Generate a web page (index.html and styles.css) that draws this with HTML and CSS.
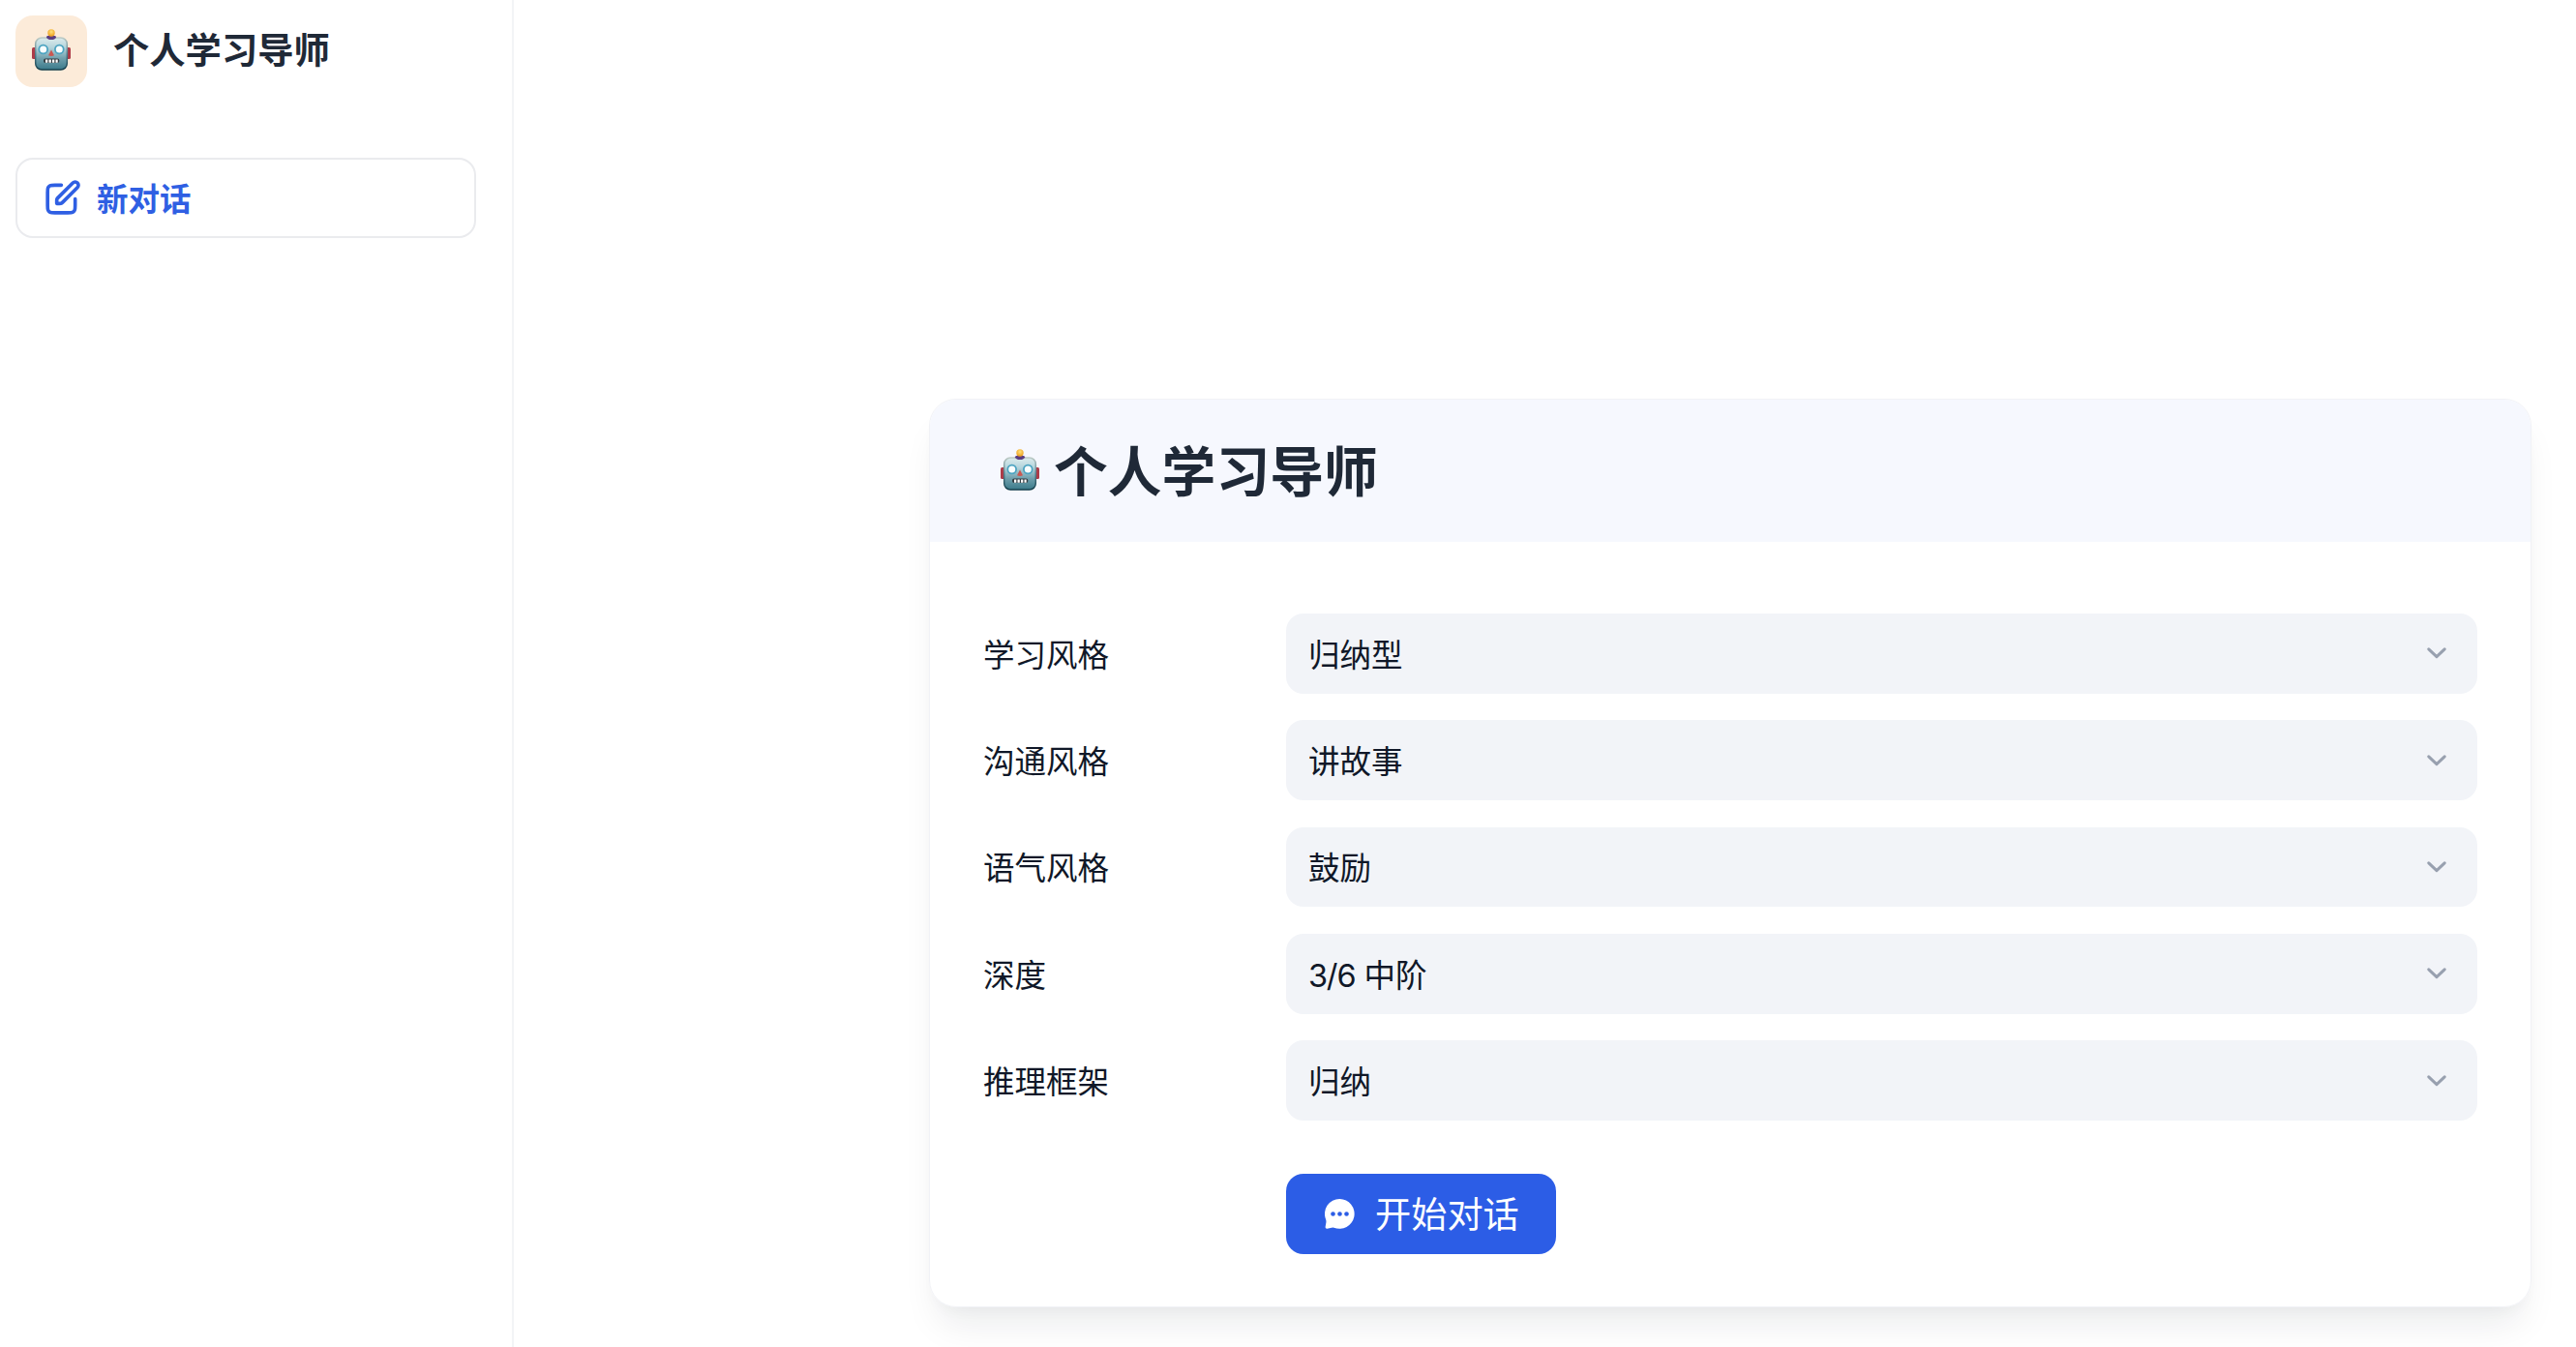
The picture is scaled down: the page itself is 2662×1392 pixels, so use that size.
FILE: index.html
```html
<!DOCTYPE html>
<html lang="zh-CN">
<head>
    <meta charset="UTF-8">
    <meta name="viewport" content="width=device-width, initial-scale=1.0">
    <title>个人学习导师</title>
    <link rel="stylesheet" href="styles.css">
</head>
<body>
 <!-- shared icons -->
 <svg class="defs" width="0" height="0">
  <defs>
   <linearGradient id="face" x1="0" y1="0" x2="0" y2="1">
    <stop offset="0" stop-color="#dcebec"/>
    <stop offset="0.3" stop-color="#b5d5dc"/>
    <stop offset="0.65" stop-color="#6f9fac"/>
    <stop offset="1" stop-color="#3b7a8a"/>
   </linearGradient>
   <linearGradient id="edge" x1="0" y1="0" x2="0" y2="1">
    <stop offset="0" stop-color="#bccac5"/>
    <stop offset="0.5" stop-color="#527f8c"/>
    <stop offset="1" stop-color="#143f4c"/>
   </linearGradient>
   <radialGradient id="bulb" cx="0.5" cy="0.35" r="0.6">
    <stop offset="0" stop-color="#ffe27a"/>
    <stop offset="1" stop-color="#eda01f"/>
   </radialGradient>
  </defs>
  <symbol id="robot" viewBox="0 0 40 43">
   <rect x="0" y="19" width="5" height="12" rx="1.5" fill="#ad3b48"/>
   <rect x="35" y="19" width="5" height="12" rx="1.5" fill="#ad3b48"/>
   <rect x="3.7" y="9" width="32.6" height="33" rx="6.5" fill="url(#face)" stroke="url(#edge)" stroke-width="1.5"/>
   <path d="M15 8.2Q15 6.5 20 6.5t5 1.700q-.5 2.800-5 2.800t-5-2.800z" fill="#5c3f80"/>
   <circle cx="20" cy="4" r="3.7" fill="url(#bulb)"/>
   <circle cx="11.7" cy="21" r="4.4" fill="#f8ffff" stroke="#4da4c1" stroke-width="1.8"/>
   <circle cx="28.3" cy="21" r="4.4" fill="#f8ffff" stroke="#4da4c1" stroke-width="1.8"/>
   <path d="M20 21.5l3 5.8q-3 1.2-6 0z" fill="#ca5751"/>
   <rect x="12" y="30.5" width="16.3" height="4.6" rx="2" fill="#343d42"/>
   <path d="M14 31.5h2.3v3.2H14zM17.5 31.5h2.3v3.2h-2.3zM21 31.5h2.3v3.2H21zM24.5 31.5h2.2v3.2h-2.2z" fill="#fff"/>
  </symbol>
  <symbol id="chevron" viewBox="0 0 20 12">
   <path d="M1.8 1.8L10 9.7l8.2-7.9" fill="none" stroke="#98a0af" stroke-width="3" stroke-linecap="round" stroke-linejoin="round"/>
  </symbol>
 </svg>

 <div class="main-container">
  <aside class="sidebar">
   <div class="brand">
    <div class="brand-icon"><svg class="robot"><use href="#robot"/></svg></div>
    <span class="brand-name">个人学习导师</span>
   </div>
   <button class="new-chat">
    <svg class="edit-icon" viewBox="0 0 24 24" fill="none" stroke="currentColor" stroke-width="2.3" stroke-linecap="round" stroke-linejoin="round">
     <path d="M11 4H6.8C5.12 4 4.28 4 3.638 4.327C3.074 4.615 2.615 5.074 2.327 5.638C2 6.28 2 7.12 2 8.8V17.2C2 18.88 2 19.72 2.327 20.362C2.615 20.927 3.074 21.386 3.638 21.673C4.28 22 5.12 22 6.8 22H15.2C16.88 22 17.72 22 18.362 21.673C18.927 21.386 19.385 20.927 19.673 20.362C20 19.72 20 18.88 20 17.2V13M8 16H9.675C10.164 16 10.408 16 10.639 15.945C10.843 15.896 11.038 15.815 11.217 15.705C11.418 15.582 11.591 15.409 11.937 15.063L21.5 5.5C22.328 4.672 22.328 3.328 21.5 2.5C20.672 1.672 19.328 1.672 18.5 2.5L8.937 12.063C8.591 12.409 8.418 12.582 8.295 12.783C8.185 12.962 8.104 13.157 8.055 13.362C8 13.592 8 13.836 8 14.326V16Z"/>
    </svg>
    <span class="text">新对话</span>
   </button>
  </aside>

  <main class="content">
   <section class="card">
    <header class="card-header">
     <svg class="robot"><use href="#robot"/></svg>
     <h1>个人学习导师</h1>
    </header>
    <div class="card-body">
     <div class="row">
      <label class="text">学习风格</label>
      <button class="select"><span class="text">归纳型</span><svg class="chevron"><use href="#chevron"/></svg></button>
     </div>
     <div class="row">
      <label class="text">沟通风格</label>
      <button class="select"><span class="text">讲故事</span><svg class="chevron"><use href="#chevron"/></svg></button>
     </div>
     <div class="row">
      <label class="text">语气风格</label>
      <button class="select"><span class="text">鼓励</span><svg class="chevron"><use href="#chevron"/></svg></button>
     </div>
     <div class="row">
      <label class="text">深度</label>
      <button class="select"><span class="text"><span class="level">3/6</span> 中阶</span><svg class="chevron"><use href="#chevron"/></svg></button>
     </div>
     <div class="row">
      <label class="text">推理框架</label>
      <button class="select"><span class="text">归纳</span><svg class="chevron"><use href="#chevron"/></svg></button>
     </div>
     <button class="start">
      <svg class="chat-icon" viewBox="0 0 31 31">
       <path d="M15.5 0A15.4 15.4 0 1 1 9.5 29.7Q8.5 29.4 7 29.8L2.5 30.8Q.4 31 .6 29L1.4 24.3Q1.6 22.8 1.2 21.5A15.4 15.4 0 0 1 15.5 0Z" fill="#fff"/>
       <circle cx="8.5" cy="15.5" r="2.3"/>
       <circle cx="15.5" cy="15.5" r="2.3"/>
       <circle cx="22.5" cy="15.5" r="2.3"/>
      </svg>
      <span class="start-text">开始对话</span>
     </button>
    </div>
   </section>
  </main>
 </div>
</body>
</html>
```
FILE: styles.css
```css
* {
    box-sizing: border-box;
}
body {
    margin: 0;
    background-color: #fff;
    color: #101828;
    font-family: Inter, "Noto Sans CJK SC", sans-serif;
    font-size: 32.5px;
}
button {
    font: inherit;
    color: inherit;
    border: none;
}
svg {
    display: block;
    flex: none;
}
.defs {
    position: absolute;
}
.text {
    padding-bottom: 2px;
}
.main-container {
    display: flex;
    height: 1392px;
    overflow: hidden;
}

/* sidebar */
.sidebar {
    flex: none;
    width: 531px;
    padding: 16px 37px 0 16px;
    border-right: 2px solid #f3f4f6;
}
.brand {
    display: flex;
    align-items: center;
    gap: 27px;
    height: 74px;
}
.brand-icon {
    display: flex;
    align-items: center;
    justify-content: center;
    width: 74px;
    height: 74px;
    padding-bottom: 3px;
    border-radius: 18px;
    background-color: #fcebd9;
}
.brand-name {
    font-size: 37.3px;
    font-weight: 600;
    line-height: 56px;
    color: #1f2937;
}
.robot {
    width: 40px;
    height: 43px;
}
.new-chat {
    display: flex;
    align-items: center;
    gap: 16px;
    width: 476px;
    height: 83px;
    margin-top: 73px;
    padding: 0 28px;
    border: 2px solid #eaebee;
    border-radius: 18px;
    background-color: #fff;
    color: #2f5fe3;
    font-weight: 600;
}
.edit-icon {
    width: 38px;
    height: 38px;
    margin-bottom: 1px;
}

/* settings card */
.content {
    flex: 1;
    padding: 412px 46px 0 429px;
}
.card {
    height: 939px;
    border: 1px solid #f1f2f6;
    border-radius: 28px;
    overflow: hidden;
    box-shadow: 0 27px 37px -9px rgba(16, 24, 40, 0.08), 0 9px 14px -5px rgba(16, 24, 40, 0.03);
}
.card-header {
    display: flex;
    align-items: center;
    gap: 15px;
    height: 147px;
    padding-left: 73px;
    background-color: #f6f8fe;
}
.card-header .robot {
    margin-bottom: 2px;
}
.card-header h1 {
    margin: 0;
    padding-top: 2px;
    font-size: 55.8px;
    font-weight: 600;
    line-height: 80px;
    color: #1f2937;
}
.card-body {
    display: flex;
    flex-direction: column;
    gap: 27.5px;
    padding: 74px 55px 0;
}
.row {
    display: flex;
    align-items: center;
    height: 82.8px;
}
.row label {
    width: 313px;
}
.select {
    flex: 1;
    display: flex;
    align-items: center;
    justify-content: space-between;
    height: 100%;
    padding: 0 32px 0 23px;
    border-radius: 18px;
    background-color: #f2f4f8;
}
.level {
    letter-spacing: -1.2px;
}
.chevron {
    width: 20px;
    height: 12px;
}
.start {
    display: flex;
    align-items: center;
    gap: 21px;
    width: 279px;
    height: 83px;
    margin: 28px 0 0 313px;
    padding: 0 0 0 40px;
    border-radius: 18px;
    background-color: #2c5de6;
    color: #fff;
    font-size: 37.2px;
}
.start-text {
    padding-bottom: 4px;
}
.chat-icon {
    width: 31px;
    height: 31px;
    fill: #2c5de6;
}
```
